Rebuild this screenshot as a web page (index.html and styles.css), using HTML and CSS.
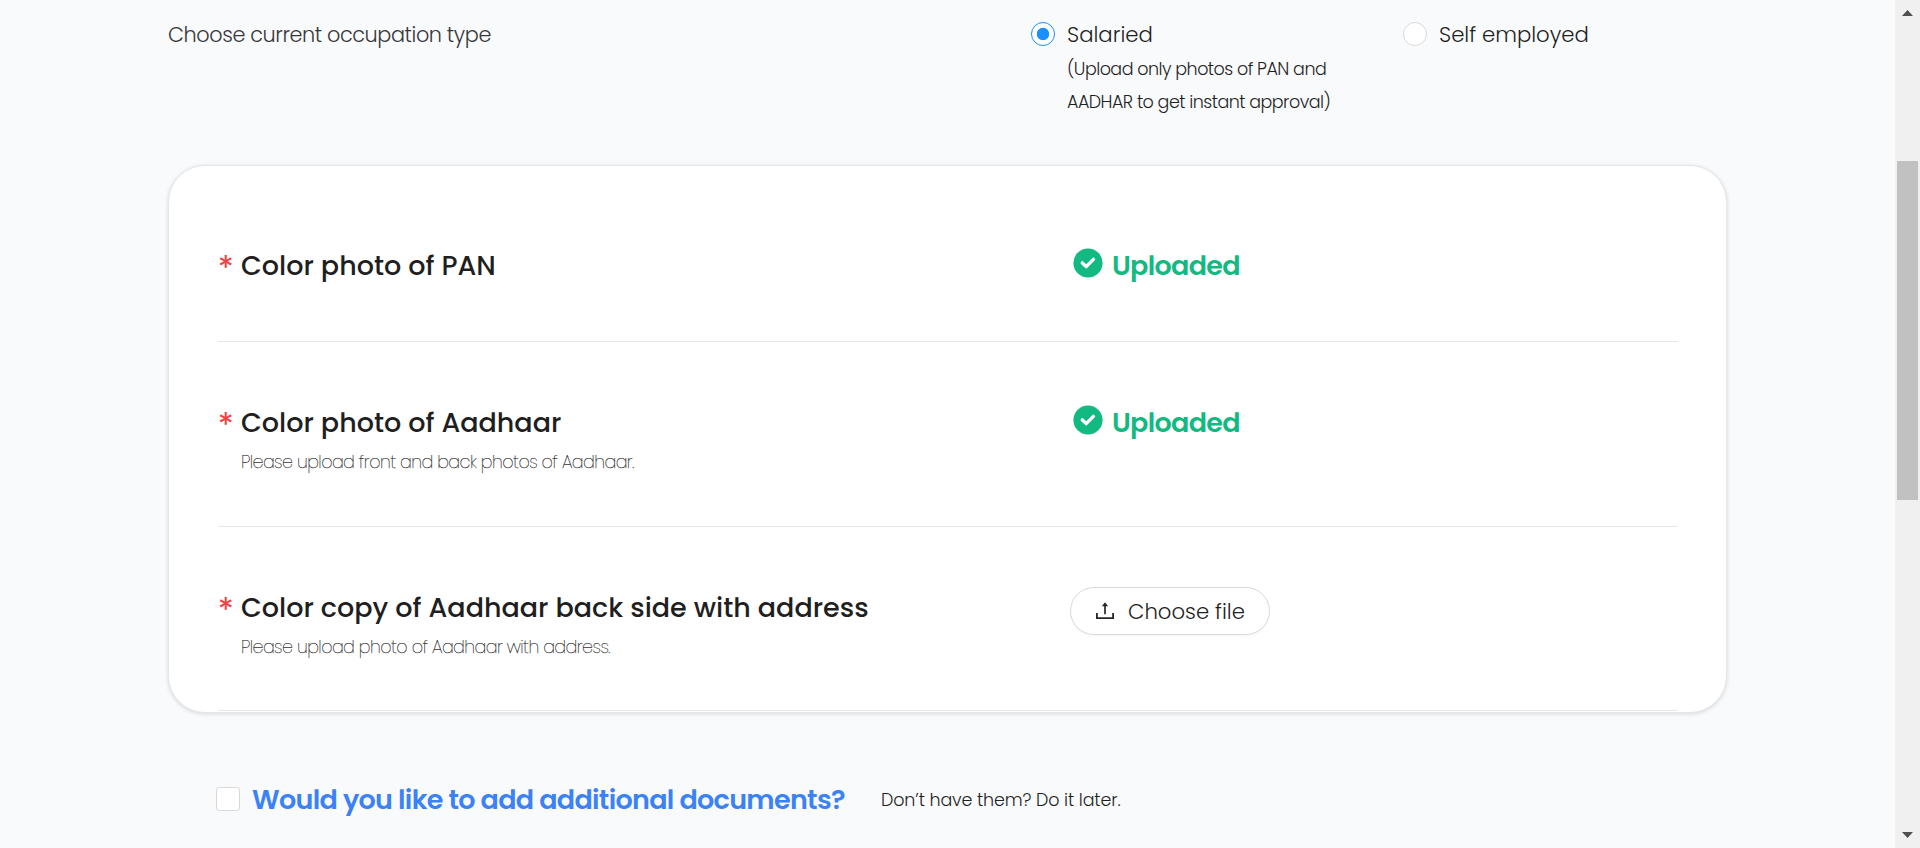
FILE: index.html
```html
<!DOCTYPE html>
<html lang="en">
<head>
<meta charset="utf-8">
<title>Upload documents</title>
<link rel="stylesheet" href="styles.css">
</head>
<body>
<main class="page">
  <section class="occupation">
    <div class="occupation-label">Choose current occupation type</div>
    <div class="option">
      <span class="radio radio-checked"></span>
      <div>
        <div class="option-name">Salaried</div>
        <div class="option-note">(Upload only photos of PAN and<br>AADHAR to get instant approval)</div>
      </div>
    </div>
    <div class="option">
      <span class="radio"></span>
      <div class="option-name">Self employed</div>
    </div>
  </section>

  <section class="card">
    <div class="row row-pan">
      <span class="star">*</span>
      <div class="doc-title">Color photo of PAN</div>
      <div class="status">
        <svg class="check" viewBox="0 0 30 30"><circle cx="15" cy="15" r="14.6" fill="#12b981"/><path d="M9.3 14.9l3.9 3.7 7.2-7.2" fill="none" stroke="#fff" stroke-width="3.4" stroke-linecap="round" stroke-linejoin="round"/></svg>
        <span>Uploaded</span>
      </div>
    </div>
    <div class="row row-front">
      <span class="star">*</span>
      <div>
        <div class="doc-title">Color photo of Aadhaar</div>
        <div class="doc-hint">Please upload front and back photos of Aadhaar.</div>
      </div>
      <div class="status">
        <svg class="check" viewBox="0 0 30 30"><circle cx="15" cy="15" r="14.6" fill="#12b981"/><path d="M9.3 14.9l3.9 3.7 7.2-7.2" fill="none" stroke="#fff" stroke-width="3.4" stroke-linecap="round" stroke-linejoin="round"/></svg>
        <span>Uploaded</span>
      </div>
    </div>
    <div class="row row-back">
      <span class="star">*</span>
      <div>
        <div class="doc-title">Color copy of Aadhaar back side with address</div>
        <div class="doc-hint">Please upload photo of Aadhaar with address.</div>
      </div>
      <button class="choose" type="button">
        <svg class="upload" viewBox="0 0 18 18"><path d="M.9 11v5.1h16.2V11" fill="none" stroke="#262626" stroke-width="1.8"/><path d="M9 12.2V3" stroke="#262626" stroke-width="1.7"/><path d="M9 .2l3.1 4H5.9z" fill="#262626"/></svg>
        <span>Choose file</span>
      </button>
    </div>
  </section>

  <section class="extra">
    <span class="checkbox"></span>
    <span class="extra-title">Would you like to add additional documents?</span>
    <span class="extra-note">Don’t have them? Do it later.</span>
  </section>
</main>
<aside class="scrollbar">
  <svg class="arrow" viewBox="0 0 11 6"><path d="M5.5 0L11 6H0z" fill="#505050"/></svg>
  <div class="thumb"></div>
  <svg class="arrow arrow-down" viewBox="0 0 11 6"><path d="M0 0h11L5.5 6z" fill="#505050"/></svg>
</aside>
</body>
</html>
```
FILE: styles.css
```css
* { box-sizing: border-box; }

body {
  margin: 0;
  display: flex;
  height: 848px;
  overflow: hidden;
  background: #f9fafc;
  color: #1f1f1f;
  font-family: Poppins, Inter, sans-serif;
  white-space: nowrap;
}

.page { flex: 1; padding: 17px 168px 0; }

.occupation {
  display: grid;
  grid-template-columns: 863px 372px 1fr;
  height: 148px;
}
.occupation-label {
  color: #383838;
  font-size: 20.8px;
  font-weight: 300;
  line-height: 35px;
  letter-spacing: -.42px;
}
.option { display: flex; gap: 12px; align-items: flex-start; }
.option-name { font-size: 21.25px; font-weight: 300; line-height: 35px; }
.option-note {
  padding-top: 1px;
  font-size: 17.5px;
  font-weight: 300;
  line-height: 33px;
  letter-spacing: -.52px;
}
.radio {
  width: 24px;
  height: 24px;
  margin-top: 5px;
  border: 1px solid #d9d9d9;
  border-radius: 50%;
  background: #fff;
}
.radio-checked {
  border-color: #1890ff;
  background: radial-gradient(circle, #1890ff 5.8px, #fff 6.6px);
}

.card {
  width: 1559px;
  height: 548px;
  padding: 0 48px 0 49px;
  border: 1px solid #e5e7eb;
  border-radius: 37px;
  background: #fff;
  box-shadow: 0 1px 4px rgba(0, 0, 0, .14);
}
.row {
  display: grid;
  grid-template-columns: 23px 829px 1fr;
  align-items: start;
  border-bottom: 1px solid #e5e7eb;
}
.row-pan { height: 176px; padding-top: 80px; }
.row-front { height: 185px; padding-top: 61px; }
.row-back { height: 184px; padding-top: 61px; }
.star {
  color: #ef4444;
  font-family: Inter, sans-serif;
  font-size: 31px;
  line-height: 42px;
}
.doc-title { font-size: 27px; font-weight: 500; line-height: 40px; }
.doc-hint {
  padding-top: 3px;
  color: #333;
  font-size: 17.5px;
  font-weight: 200;
  line-height: 33px;
  letter-spacing: -.55px;
  -webkit-text-stroke: .25px #333;
}
.status {
  display: flex;
  gap: 9px;
  padding-left: 3px;
  color: #12b981;
  font-size: 27px;
  font-weight: 600;
  line-height: 40px;
  letter-spacing: -.7px;
}
.check { width: 30px; height: 30px; margin-top: 2px; }
.choose {
  display: flex;
  align-items: center;
  gap: 14px;
  width: 200px;
  height: 48px;
  margin-top: -1px;
  padding: 0 0 0 25px;
  border: 1px solid #d9d9d9;
  border-radius: 24px;
  background: #fff;
  box-shadow: 0 2px 0 rgba(0, 0, 0, .02);
  color: #1f1f1f;
  font: inherit;
  font-size: 21.25px;
  font-weight: 300;
}
.upload { width: 18px; height: 18px; }

.extra { display: flex; align-items: center; height: 40px; margin: 66px 0 0 48px; }
.checkbox {
  width: 24px;
  height: 24px;
  border: 1px solid #d9d9d9;
  border-radius: 3px;
  background: #fff;
}
.extra-title {
  width: 629px;
  margin-left: 12px;
  padding-top: 2px;
  color: #3b82f6;
  font-size: 27px;
  font-weight: 600;
  letter-spacing: -.68px;
}
.extra-note { padding-top: 2px; font-size: 17.5px; font-weight: 300; letter-spacing: -.12px; }

.scrollbar {
  display: flex;
  flex-direction: column;
  align-items: center;
  width: 25px;
  padding: 10px 0;
  background: #f0f0f0;
}
.arrow { width: 11px; height: 6px; }
.thumb { width: 21px; height: 339px; margin-top: 145px; background: #c1c1c1; }
.arrow-down { margin-top: auto; }
```
